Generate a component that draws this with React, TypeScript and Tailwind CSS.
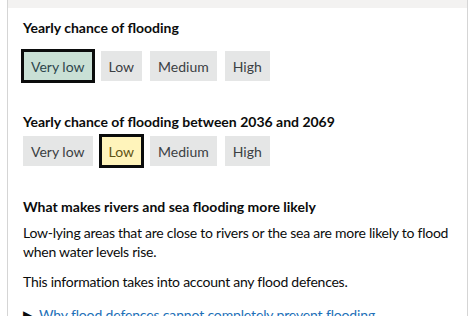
import React from "react";

const font = { fontFamily: 'Lato, "Liberation Sans", Arial, sans-serif' };

function Tag({ label, variant }: { label: string; variant: "grey" | "green" | "yellow" }) {
  if (variant === "green") {
    return (
      <span className="-m-[2px] inline-flex h-[34px] items-center border-[3px] border-[#0b0c0c] bg-[#c9e0d5] px-[7px] text-[14px] text-[#2e464c]">
        {label}
      </span>
    );
  }
  if (variant === "yellow") {
    return (
      <span className="-m-[2px] inline-flex h-[34px] items-center border-[3px] border-[#0b0c0c] bg-[#fff4bb] px-[7px] text-[14px] text-[#5e5313]">
        {label}
      </span>
    );
  }
  return (
    <span className="inline-flex h-[30px] items-center bg-[#e5e6e6] px-[8px] text-[14px] text-[#3b4043]">
      {label}
    </span>
  );
}

export default function App() {
  const levels = ["Very low", "Low", "Medium", "High"];
  return (
    <div className="h-[316px] w-[476px] overflow-hidden bg-white" style={font}>
      <div className="ml-[7px] mr-[8px] h-full border-x border-[#d5d5d5]">
        <div className="h-[8px] bg-[#f3f2f1]" />
        <div className="px-[15px] pt-[10px] text-[#0b0c0c]">
          <h2 className="text-[14px] font-bold leading-[20px]">Yearly chance of flooding</h2>
          <div className="mt-[13px] flex gap-[8px]">
            {levels.map((l) => (
              <Tag key={l} label={l} variant={l === "Very low" ? "green" : "grey"} />
            ))}
          </div>
          <h2 className="mt-[31px] text-[14px] font-bold leading-[20px]">
            Yearly chance of flooding between 2036 and 2069
          </h2>
          <div className="mt-[4px] flex gap-[8px]">
            {levels.map((l) => (
              <Tag key={l} label={l} variant={l === "Low" ? "yellow" : "grey"} />
            ))}
          </div>
          <h3 className="mt-[31px] text-[14px] font-bold leading-[20px]">
            What makes rivers and sea flooding more likely
          </h3>
          <p className="mt-[6px] text-[14px] leading-[19px] tracking-[-0.25px]">
            Low-lying areas that are close to rivers or the sea are more likely to flood when water levels rise.
          </p>
          <p className="mt-[11px] text-[14px] leading-[19px] tracking-[-0.25px]">
            This information takes into account any flood defences.
          </p>
          <div className="mt-[14px] flex items-center gap-[7px] text-[14px] leading-[19px] text-[#1d70b8]">
            <span className="text-[12px] leading-[12px] text-[#0b0c0c]">▶</span>
            <span className="underline decoration-1 underline-offset-2 tracking-[-0.15px]">
              Why flood defences cannot completely prevent flooding
            </span>
          </div>
        </div>
      </div>
    </div>
  );
}
